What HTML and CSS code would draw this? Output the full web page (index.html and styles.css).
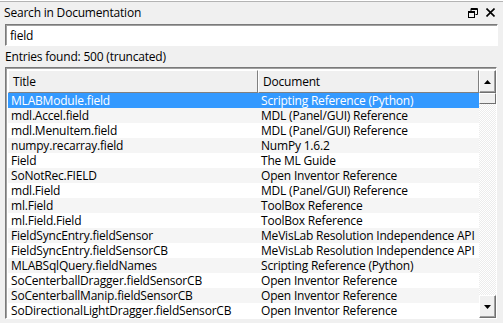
FILE: index.html
```html
<!DOCTYPE html>
<html lang="en">
<head>
  <meta charset="UTF-8">
  <title>Search in Documentation</title>
  <link rel="stylesheet" href="styles.css">
</head>
<body>
  <div class="panel">
    <header class="panel-header">
      <span class="panel-title">Search in Documentation</span>
      <span class="panel-buttons">
        <svg width="10" height="10" viewBox="0 0 10 10">
          <path d="M3 0.5h6.5v6h-2M3 0.5v2.5M3 1.5h6.5" fill="none" stroke="#000" stroke-width="1"/>
          <rect x="0.5" y="3.5" width="6" height="6" fill="none" stroke="#000"/>
          <line x1="0.5" y1="4.5" x2="6.5" y2="4.5" stroke="#000"/>
        </svg>
        <svg width="9" height="9" viewBox="0 0 9 9">
          <path d="M0.5 0.5l8 8M8.5 0.5l-8 8" stroke="#000" stroke-width="1.6"/>
        </svg>
      </span>
    </header>

    <input class="search-input" type="text" value="field">
    <div class="entries">Entries found: 500 (truncated)</div>

    <div class="list">
      <div class="list-main">
        <div class="list-head">
          <div class="col col-title">Title</div>
          <div class="col col-doc">Document</div>
        </div>
        <div class="row selected"><span class="col-title">MLABModule.field</span><span class="col-doc">Scripting Reference (Python)</span></div>
        <div class="row alt"><span class="col-title">mdl.Accel.field</span><span class="col-doc">MDL (Panel/GUI) Reference</span></div>
        <div class="row"><span class="col-title">mdl.MenuItem.field</span><span class="col-doc">MDL (Panel/GUI) Reference</span></div>
        <div class="row alt"><span class="col-title">numpy.recarray.field</span><span class="col-doc">NumPy 1.6.2</span></div>
        <div class="row"><span class="col-title">Field</span><span class="col-doc">The ML Guide</span></div>
        <div class="row alt"><span class="col-title">SoNotRec.FIELD</span><span class="col-doc">Open Inventor Reference</span></div>
        <div class="row"><span class="col-title">mdl.Field</span><span class="col-doc">MDL (Panel/GUI) Reference</span></div>
        <div class="row alt"><span class="col-title">ml.Field</span><span class="col-doc">ToolBox Reference</span></div>
        <div class="row"><span class="col-title">ml.Field.Field</span><span class="col-doc">ToolBox Reference</span></div>
        <div class="row alt"><span class="col-title">FieldSyncEntry.fieldSensor</span><span class="col-doc">MeVisLab Resolution Independence API</span></div>
        <div class="row"><span class="col-title">FieldSyncEntry.fieldSensorCB</span><span class="col-doc">MeVisLab Resolution Independence API</span></div>
        <div class="row alt"><span class="col-title">MLABSqlQuery.fieldNames</span><span class="col-doc">Scripting Reference (Python)</span></div>
        <div class="row"><span class="col-title">SoCenterballDragger.fieldSensorCB</span><span class="col-doc">Open Inventor Reference</span></div>
        <div class="row alt"><span class="col-title">SoCenterballManip.fieldSensorCB</span><span class="col-doc">Open Inventor Reference</span></div>
        <div class="row"><span class="col-title">SoDirectionalLightDragger.fieldSensorCB</span><span class="col-doc">Open Inventor Reference</span></div>
      </div>
      <div class="scrollbar">
        <div class="sb-btn">
          <svg width="7" height="4" viewBox="0 0 7 4"><path d="M3.5 0L7 4H0z" fill="#000"/></svg>
        </div>
        <div class="sb-thumb"></div>
        <div class="sb-track"></div>
        <div class="sb-btn">
          <svg width="7" height="4" viewBox="0 0 7 4"><path d="M0 0h7L3.5 4z" fill="#000"/></svg>
        </div>
      </div>
    </div>
  </div>
</body>
</html>
```

FILE: styles.css
```css
body {
  margin: 0;
  background-color: #f0f0f0;
  font-family: "Open Sans", "Noto Sans", sans-serif;
  font-size: 12px;
  letter-spacing: -0.2px;
  color: #000;
  overflow: hidden;
}

.panel {
  width: 503px;
  height: 323px;
  display: flex;
  flex-direction: column;
  box-sizing: border-box;
  border-top: 1px solid #fff;
}

.panel-header {
  display: flex;
  align-items: center;
  justify-content: space-between;
  height: 21px;
  padding: 0 8px 0 4px;
  border-top: 1px solid #b4b4b4;
}

.panel-buttons {
  display: flex;
  align-items: center;
  gap: 8px;
}

.search-input {
  margin: 1px 5px 0 5px;
  height: 22px;
  box-sizing: border-box;
  padding: 0 4px;
  font: inherit;
  letter-spacing: inherit;
  background: #fff;
  border: 1px solid;
  border-color: #7a7a7a #fff #fff #7a7a7a;
  box-shadow: inset 1px 1px 0 #a0a0a0;
  outline: none;
}

.entries {
  padding: 2px 5px 0;
  height: 18px;
  line-height: 18px;
}

.list {
  display: flex;
  margin: 1px 6px 0 5px;
  height: 252px;
  box-sizing: border-box;
  border: 1px solid;
  border-color: #7a7a7a #fff #fff #7a7a7a;
  box-shadow: inset 1px 1px 0 #a0a0a0;
  padding: 2px 0 0 2px;
  background-color: #fff;
  overflow: hidden;
}

.list-main {
  flex: 1;
  overflow: hidden;
}

.list-head {
  display: flex;
  height: 23px;
  background-color: #f0f0f0;
}

.list-head .col {
  box-sizing: border-box;
  padding-left: 4px;
  line-height: 21px;
  border: 1px solid;
  border-color: #fff #808080 #808080 #fff;
}

.list-head .col-title {
  width: 250px;
}

.list-head .col-doc {
  flex: 1;
}

.row {
  display: flex;
  height: 15px;
  line-height: 15px;
  white-space: nowrap;
  background-color: #fff;
}

.row.alt {
  background-color: #f5f5f5;
}

.row.selected {
  background-color: #3399ff;
  color: #fff;
}

.row .col-title {
  width: 250px;
  padding-left: 3px;
  box-sizing: border-box;
}

.row .col-doc {
  padding-left: 3px;
}

.scrollbar {
  width: 17px;
  display: flex;
  flex-direction: column;
  background-color: #f0f0f0;
  background-image: repeating-conic-gradient(#fff 0 25%, #ececec 0 50%);
  background-size: 2px 2px;
}

.sb-btn {
  height: 23px;
  box-sizing: border-box;
  display: flex;
  align-items: center;
  justify-content: center;
  background-color: #f0f0f0;
  border: 1px solid;
  border-color: #fff #707070 #707070 #fff;
  box-shadow: inset -1px -1px 0 #a0a0a0;
}

.sb-thumb {
  height: 9px;
  background-color: #f0f0f0;
  border: 1px solid;
  border-color: #fff #707070 #707070 #fff;
}

.sb-track {
  flex: 1;
}
```
